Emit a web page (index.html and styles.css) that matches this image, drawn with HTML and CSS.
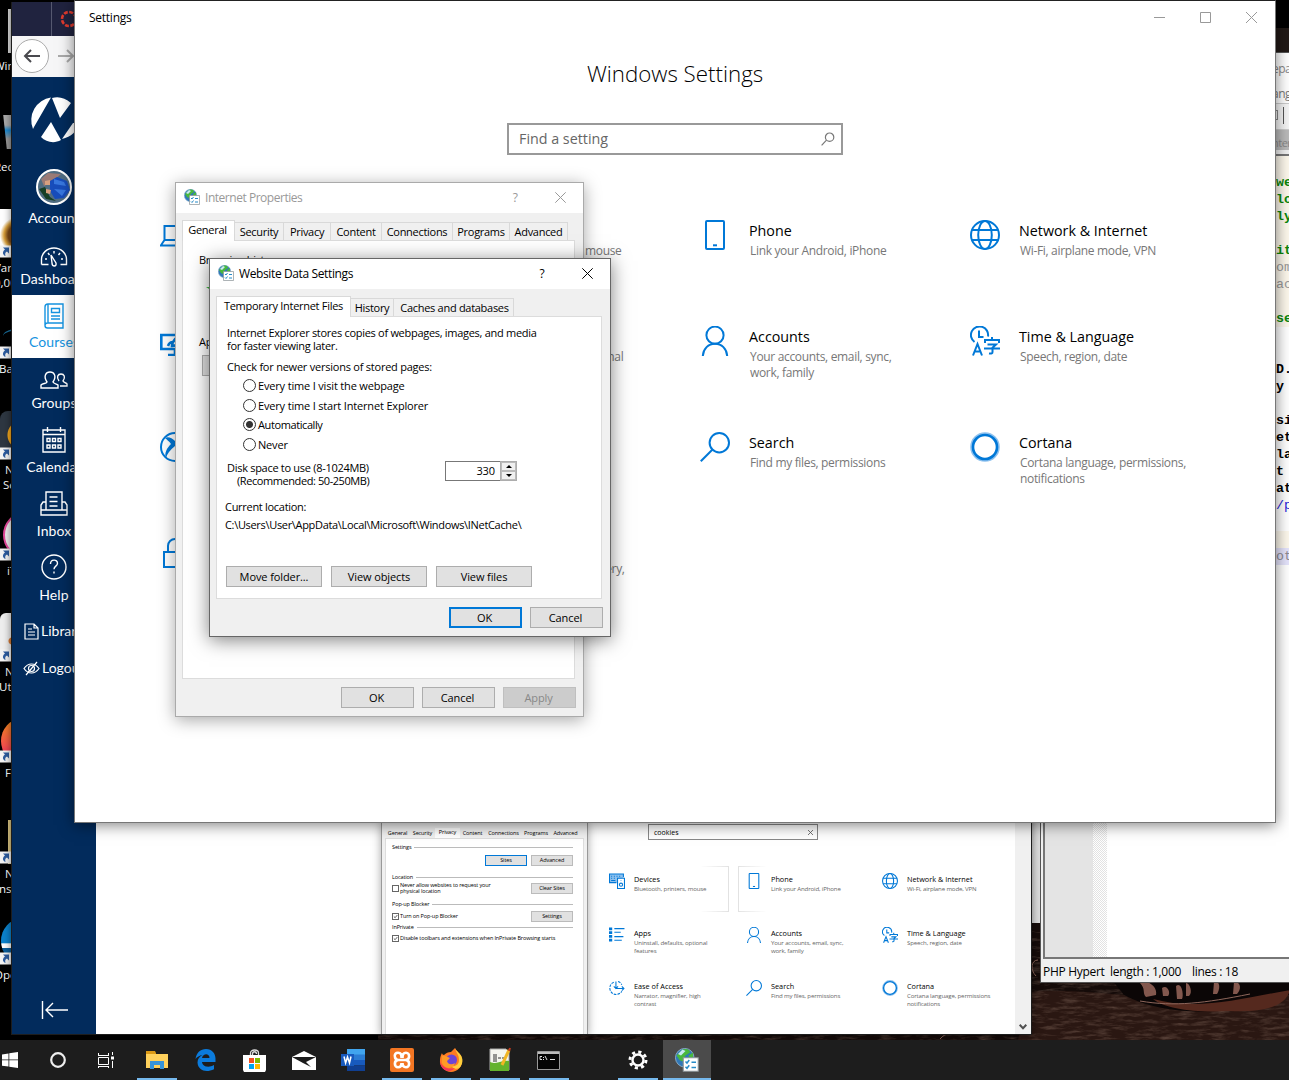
FILE: index.html
```html
<!DOCTYPE html>
<html lang="en">
<head>
<meta charset="utf-8">
<title>Settings</title>
<link rel="stylesheet" href="styles.css">
</head>
<body>
<svg class="defs" width="0" height="0">
  <symbol id="i-phone" viewBox="0 0 30 30"><rect x="6" y="1" width="18" height="28" rx="1"/><path d="M13 25.3h4"/></symbol>
  <symbol id="i-user" viewBox="0 0 30 30"><circle cx="15" cy="9.2" r="8.6"/><path d="M2.8 30c.5-7.300 5.500-12.200 12.200-12.200S26.700 22.700 27.200 30"/></symbol>
  <symbol id="i-search" viewBox="0 0 30 30"><circle cx="19.300" cy="10.700" r="9.700"/><path d="M12.500 17.500.8 29.200"/></symbol>
  <symbol id="i-globe" viewBox="0 0 30 30"><circle cx="15" cy="15" r="14"/><ellipse cx="15" cy="15" rx="6.800" ry="14"/><path d="M2 10h26M2 20h26"/></symbol>
  <symbol id="i-time" viewBox="0 0 30 30"><path d="M4.500 16A8.600 8.600 0 1 1 18 10.500M9 4.500V11h4.500M3 29.500 7.500 18l4.500 11.500M4.500 25.500h6M15 17v-3h14v3M22 11v3M17.500 18.500h8.500l-3.500 3.200V26c0 1.500-.8 1.800-3.500 1.500M14 22.500h16"/></symbol>
  <symbol id="i-cortana" viewBox="0 0 30 30"><circle cx="15" cy="15" r="13.600" stroke="#8ec1ee" stroke-width="2.400"/><circle cx="15" cy="15" r="12" stroke-width="2.600"/></symbol>
  <symbol id="i-laptop" viewBox="0 0 30 30"><path d="M4.500 6h22v14h-22zM4.500 20 .8 25.500h28.400L26.500 20"/></symbol>
  <symbol id="i-personal" viewBox="0 0 30 30"><path stroke-width="2.600" d="M22 9H1.300v14H29V12M8 29h14M15 23v6M12 20c0-5 3-9 14-14-3 8-7 14-14 14zM8 20c1-3 2-4 5-4"/></symbol>
  <symbol id="i-gaming" viewBox="0 0 30 30"><circle cx="15" cy="15" r="14"/><path fill="#0078d7" stroke="none" d="M5 6c3-2 7 0 10 3 3-3 7-5 10-3-4 1-6 3-8 6 5 5 7 9 7 14-2-6-5-10-9-12-5 4-8 8-9 12-2-5 1-10 5-14-2-3-4-4-6-6z"/></symbol>
  <symbol id="i-lock" viewBox="0 0 30 30"><path d="M4 14h22v15H4zM8 14V8a7 7 0 0 1 14 0v6"/></symbol>
  <symbol id="i-devices" viewBox="0 0 30 30"><path fill="#8ec1ee" d="M14 18H1V2h26v6"/><path d="M4 6h2m3 0h2m3 0h2m3 0h2M4 10h2m3 0h2M4 14h8"/><path fill="#fff" d="M16 10h13v19H16z"/><circle cx="22.500" cy="22" r="3"/><path d="M22 14h1"/></symbol>
  <symbol id="i-apps" viewBox="0 0 30 30"><path fill="#0078d7" stroke="none" d="M0 1h6v5H0zM0 8h6v5H0zM0 15h6v5H0zM0 22h6v5H0z"/><path d="M10 3h19M10 10h12M10 18h17M10 25h14"/></symbol>
  <symbol id="i-ease" viewBox="0 0 30 30"><path d="M13 3v13h15M24 12l4 4-4 4M9 12l4 4 4-4"/><path stroke-dasharray="5 2" d="M9 4a12 12 0 1 0 15 17M17 3a12 12 0 0 1 7 6"/></symbol>
  <symbol id="i-inet" viewBox="0 0 16 16"><circle cx="6.500" cy="6.500" r="6.200" fill="#3178b8" stroke="#8db2cf" stroke-width=".6"/><path fill="#49b83d" d="M5 1c3-1 5 0 5 2L7 5 5 9 3 8 1 5zM9 5l3-2v4l-2 2z"/><path fill="#c9e8f4" d="M2 4 5 1l2 1-3 3z"/><path fill="#fff" stroke="#8a9296" stroke-width=".7" d="M5.500 6.500h10v9h-10z"/><path fill="none" stroke="#278bc8" stroke-width="1" d="M7 9l1 1 1.500-2M7 12.500l1 1 1.500-2M11 9.500H14M11 13H14"/></symbol>
  <symbol id="i-arrow" viewBox="0 0 12 13"><path fill="#f4f4f4" d="M-3 .5h14v12H-3z"/><path fill="#2d5c9f" d="M3 2.500h6v6L7 6.600C5 7.500 5 9 5.500 11 2.500 10 2 6.500 5 4.500z"/></symbol>
</svg>

<div class="desktop">
  <div class="shortcuts">
    <div class="shortcut"><i class="art art-pc"></i><span>Win</span></div>
    <div class="shortcut"><i class="art art-bin"></i><span>Rec</span></div>
    <div class="shortcut"><i class="art art-war"></i><svg class="badge"><use href="#i-arrow"/></svg><span>Var<br>0,00</span></div>
    <div class="shortcut"><i class="art art-bat"></i><svg class="badge"><use href="#i-arrow"/></svg><span class="in0">Ba</span></div>
    <div class="shortcut"><i class="art art-nor"></i><svg class="badge"><use href="#i-arrow"/></svg><span class="in">N<br><b>Se</b></span></div>
    <div class="shortcut"><i class="art art-it"></i><svg class="badge"><use href="#i-arrow"/></svg><span class="in2">iT</span></div>
    <div class="shortcut"><i class="art art-util"></i><svg class="badge"><use href="#i-arrow"/></svg><span class="in">N<br><b class="far">Uti</b></span></div>
    <div class="shortcut"><i class="art art-fox"></i><svg class="badge"><use href="#i-arrow"/></svg><span class="in">F</span></div>
    <div class="shortcut"><i class="art art-ins"></i><svg class="badge"><use href="#i-arrow"/></svg><span class="in">N<br><b class="far">ns</b></span></div>
    <div class="shortcut"><i class="art art-open"></i><svg class="badge"><use href="#i-arrow"/></svg><span>Ope</span></div>
  </div>
  <svg class="wall" viewBox="0 0 911 160">
    <defs><filter id="grain" x="0" y="0" width="100%" height="100%"><feTurbulence type="fractalNoise" baseFrequency=".06 .3" numOctaves="4" seed="4"/><feColorMatrix values="0 0 0 0 .27  0 0 0 0 .17  0 0 0 0 .13  1 0 0 0 -.45"/></filter></defs>
    <path fill="#150b09" d="M0 0h911v160H0z"/>
    <path fill="#2a1712" d="M650 112c80-6 160 20 261 0v48H640z"/>
    <path filter="url(#grain)" d="M0 0h911v160H0z"/>
    <path fill="#0b0606" d="M730 95h181v20c-50 20-120 24-165 0z"/>
    <path fill="#55291e" d="M775 119c45 12 85 0 137-9-5 20-35 22-60 21-35 2-65-2-77-12z"/>
    <path fill="#83584e" d="M762 103c8-4 18 4 16 12l-10 2c-4-4 0-8-6-14zM784 108c6-4 9 6 6 8h-5zM798 106c6-5 8 10 6 13h-5zM808 103c4 0 7 10 3 13h-3zM836 102c7-2 6 8 3 12h-4zM856 102c8 0 7 8 3 12h-4z"/>
    <path fill="none" stroke="#8e665b" d="M660 80c-7 0-8 10-2 16M562 159c6-7 10-4 14-7M762 121c35 6 65 2 110-7"/>
  </svg>
  <div class="backwin"></div>

  <section class="npp">
    <div class="npp-title">epa</div>
    <div class="npp-menu">ang</div>
    <div class="npp-tools"><i></i><i></i></div>
    <div class="npp-tab">nter</div>
    <div class="npp-edit">
      <div class="npp-lines"></div><div class="npp-fold"></div>
      <div class="code">
        <p class="c g">we</p><p class="c g">lo</p><p class="c g">ly</p><p class="c"></p><p class="c g">it</p><p class="c s">om</p><p class="c s">ac</p><p class="c"></p><p class="c g">se</p><p></p><p></p><p>D.</p><p>y</p><p></p><p>si</p><p>et</p><p>la</p><p>t</p><p>at</p><p class="b">/p</p><p></p><p class="c"></p><p class="now">ot</p>
      </div>
    </div>
    <div class="npp-status"><span>PHP Hypert</span><span>length : 1,000</span><span>lines : 18</span></div>
  </section>

  <section class="browser">
    <div class="tabstrip"><i></i><svg width="18" height="18" viewBox="0 0 18 18"><circle cx="9" cy="9" r="7" fill="none" stroke="#e23b2e" stroke-width="2.600" stroke-dasharray="4 1.500"/></svg></div>
    <div class="toolbar">
      <span class="back"><svg width="18" height="16" viewBox="0 0 18 16"><path d="M17 8H2M8 2 2 8l6 6"/></svg></span>
      <svg class="fwd" width="18" height="16" viewBox="0 0 18 16"><path d="M1 8h15M10 2l6 6-6 6"/></svg>
    </div>
    <div class="viewport">
      <nav class="side">
        <svg class="logo" width="47" height="47" viewBox="0 0 47 47"><path fill="#fff" d="M1 33A23 23 0 0 1 19 1.500L2 31zM20 2c7-2 13 0 19 5L28 22zM9 41l10-15 10 18C22 48 14 46 9 41zM30 43l11-16h5c0 8-7 14-16 16z"/></svg>
        <div class="item acct"><svg class="avatar" width="36" height="36" viewBox="0 0 36 36"><circle cx="18" cy="18" r="17" fill="#506d82" stroke="#fff" stroke-width="2"/><path fill="#9b7b76" d="M5 10 12 4l13 1-9 8-8 4z"/><path fill="#173f25" d="M3 20l6-2 5 10 6 4-10-2z"/><path fill="#184dbb" d="M14 12l7-4 10 4 3 9-6 8-9 1-5-8z"/><path fill="#3877de" d="M18 10l10 3 2 4-12-2zM18 20l12 1-4 6z"/><path fill="#d7a07f" d="M9 12l5-1v5H9zM10 20l5 1-1 4-4-1z"/></svg><span>Account</span></div>
        <div class="item dash"><svg width="28" height="20" viewBox="0 0 28 20"><path d="M1.500 17.500v-5a12.500 11.500 0 0 1 25 0v5h-6M1.500 17.500h7M5 12h2M21 12h2M8 6l1.500 2M14 4v2.500M20 6l-1.500 2"/><path d="M11 8l5 8c1 4-4 4-4 0z"/></svg><span>Dashboard</span></div>
        <div class="item active"><svg width="22" height="26" viewBox="0 0 22 26"><path d="M5 1h15v19H4.500a2.500 2.500 0 0 0 0 5H20v-5M5 1a3 3 0 0 0-3 3v18M5 1v19M8.500 5.500h8v4h-8zM8 13h9M8 16h9"/></svg><span>Courses</span></div>
        <div class="item grp"><svg width="28" height="18" viewBox="0 0 28 18"><path d="M7 11C3 5 6 1 10 1s7 4 3 10c1 2 4 2 5 3v3H1v-3c2-2 5-1 6-3zM19 10c-3-4-1-7 2-7s5 3 2 7c1 2 4 2 4 3v2h-7"/></svg><span>Groups</span></div>
        <div class="item cal"><svg width="24" height="27" viewBox="0 0 24 27"><path d="M1 4h22v22H1zM1 8.500h22M5.500 1v5M18.500 1v5M5 12.500h3v3H5zM10.500 12.500h3v3h-3zM16 12.500h3v3h-3zM5 19h3v3H5zM10.500 19h3v3h-3zM16 19h3v3h-3z"/></svg><span>Calendar</span></div>
        <div class="item inb"><svg width="28" height="25" viewBox="0 0 28 25"><path d="M6 19V1h16v18M6 11H3l-2 3v10h26V14l-2-3h-3M1 19h26M9.500 6h8M9.500 10.500h8M9.500 15h8"/></svg><span>Inbox</span></div>
        <div class="item hlp"><svg width="26" height="26" viewBox="0 0 26 26"><circle cx="13" cy="13" r="12"/><path d="M9.500 10c0-5 7-5 7-.8 0 3-3.500 2.800-3.500 6M13 17.500v2"/></svg><span>Help</span></div>
        <div class="row lib"><svg width="15" height="17" viewBox="0 0 15 17"><path d="M1 1h9l4 4v11H1zM10 1v4h4M4 6h4M4 9h7M4 12h7"/></svg><span>Library</span></div>
        <div class="row"><svg width="17" height="15" viewBox="0 0 17 15"><path d="M1 7.500c4-6 11-6 15 0-4 6-11 6-15 0zM14 1 3 14"/><circle cx="8.500" cy="7.500" r="3"/></svg><span>Logout</span></div>
        <svg class="collapse" width="27" height="18" viewBox="0 0 27 18"><path d="M1.500 0v18M27 9H5M12 2 5 9l7 7"/></svg>
      </nav>
      <main class="page">
        <div class="shot-dialog">
          <div class="mini-tabs"><span>General</span><span>Security</span><span class="on">Privacy</span><span>Content</span><span>Connections</span><span>Programs</span><span>Advanced</span></div>
          <div class="mini-panel">
            <h6>Settings</h6>
            <div class="mini-row r1"><b class="btn hot">Sites</b><b class="btn">Advanced</b></div>
            <h6>Location</h6>
            <div class="mini-row r2"><i class="cb"></i><span>Never allow websites to request your<br>physical location</span><b class="btn">Clear Sites</b></div>
            <h6>Pop-up Blocker</h6>
            <div class="mini-row r3"><svg class="cb" viewBox="0 0 7 7"><path d="M1.200 3.500 3 5.200 6 1.500"/></svg><span>Turn on Pop-up Blocker</span><b class="btn">Settings</b></div>
            <h6>InPrivate</h6>
            <div class="mini-row r4"><svg class="cb" viewBox="0 0 7 7"><path d="M1.200 3.500 3 5.200 6 1.500"/></svg><span>Disable toolbars and extensions when InPrivate Browsing starts</span></div>
          </div>
        </div>
        <div class="shot-settings">
          <div class="mini-search"><span>cookies</span><svg width="5" height="5" viewBox="0 0 5 5"><path stroke="#555" stroke-width=".8" d="M0 0l5 5M5 0 0 5"/></svg></div>
          <div class="mini-grid">
            <div class="cat glow-r"><svg><use href="#i-devices"/></svg><div><h3>Devices</h3><p>Bluetooth, printers, mouse</p></div></div>
            <div class="cat glow-l"><svg><use href="#i-phone"/></svg><div><h3>Phone</h3><p>Link your Android, iPhone</p></div></div>
            <div class="cat"><svg><use href="#i-globe"/></svg><div><h3>Network &amp; Internet</h3><p>Wi-Fi, airplane mode, VPN</p></div></div>
            <div class="cat"><svg><use href="#i-apps"/></svg><div><h3>Apps</h3><p>Uninstall, defaults, optional<br>features</p></div></div>
            <div class="cat"><svg><use href="#i-user"/></svg><div><h3>Accounts</h3><p>Your accounts, email, sync,<br>work, family</p></div></div>
            <div class="cat"><svg><use href="#i-time"/></svg><div><h3>Time &amp; Language</h3><p>Speech, region, date</p></div></div>
            <div class="cat"><svg><use href="#i-ease"/></svg><div><h3>Ease of Access</h3><p>Narrator, magnifier, high<br>contrast</p></div></div>
            <div class="cat"><svg><use href="#i-search"/></svg><div><h3>Search</h3><p>Find my files, permissions</p></div></div>
            <div class="cat"><svg><use href="#i-cortana"/></svg><div><h3>Cortana</h3><p>Cortana language, permissions<br>notifications</p></div></div>
          </div>
        </div>
      </main>
      <div class="scroll"><svg width="8" height="6" viewBox="0 0 8 6"><path d="M.7.8 4 4.200 7.300.8" fill="none" stroke="#505050" stroke-width="2"/></svg></div>
    </div>
  </section>

  <section class="settings">
    <header><span>Settings</span>
      <svg width="11" height="11" viewBox="0 0 11 11"><path d="M0 5.500h11"/></svg>
      <svg width="11" height="11" viewBox="0 0 11 11"><path d="M.5.500h10v10H.5z"/></svg>
      <svg width="11" height="11" viewBox="0 0 11 11"><path d="M0 0l11 11M11 0 0 11"/></svg>
    </header>
    <h1>Windows Settings</h1>
    <div class="search"><span>Find a setting</span><svg width="14" height="14" viewBox="0 0 14 14"><circle cx="8.600" cy="5.200" r="4.200"/><path d="M5.500 8.200.6 13.300"/></svg></div>
    <div class="grid">
      <div class="cat"><svg><use href="#i-laptop"/></svg></div>
      <div class="cat"><svg></svg><div><h3>Devices</h3><p>Bluetooth, printers, mouse</p></div></div>
      <div class="cat"><svg><use href="#i-phone"/></svg><div><h3>Phone</h3><p>Link your Android, iPhone</p></div></div>
      <div class="cat"><svg><use href="#i-globe"/></svg><div><h3>Network &amp; Internet</h3><p>Wi-Fi, airplane mode, VPN</p></div></div>
      <div class="cat"><svg><use href="#i-personal"/></svg></div>
      <div class="cat"><svg></svg><div><h3>Apps</h3><p>Uninstall, defaults, optional</p></div></div>
      <div class="cat"><svg><use href="#i-user"/></svg><div><h3>Accounts</h3><p>Your accounts, email, sync,<br>work, family</p></div></div>
      <div class="cat"><svg><use href="#i-time"/></svg><div><h3>Time &amp; Language</h3><p>Speech, region, date</p></div></div>
      <div class="cat"><svg><use href="#i-gaming"/></svg></div>
      <div class="cat"></div>
      <div class="cat"><svg><use href="#i-search"/></svg><div><h3>Search</h3><p>Find my files, permissions</p></div></div>
      <div class="cat"><svg><use href="#i-cortana"/></svg><div><h3>Cortana</h3><p>Cortana language, permissions,<br>notifications</p></div></div>
      <div class="cat"><svg><use href="#i-lock"/></svg></div>
      <div class="cat"><svg></svg><div><h3>Update</h3><p>Windows Update, recovery,</p></div></div>
    </div>
  </section>

  <section class="dialog props">
    <header><svg class="app"><use href="#i-inet"/></svg><span>Internet Properties</span><b>?</b><svg class="x" viewBox="0 0 11 11"><path d="M.3.300l10.400 10.400M10.700.3.300 10.700"/></svg></header>
    <div class="tabs"><span class="on">General</span><span>Security</span><span>Privacy</span><span>Content</span><span>Connections</span><span>Programs</span><span>Advanced</span></div>
    <div class="panel"><p class="bh">Browsing history</p><i class="tick"></i><p class="ap">Ap</p><div class="btn"></div></div>
    <footer><div class="btn">OK</div><div class="btn">Cancel</div><div class="btn off">Apply</div></footer>
  </section>

  <section class="dialog wds">
    <header><svg class="app"><use href="#i-inet"/></svg><span>Website Data Settings</span><b>?</b><svg class="x" viewBox="0 0 11 11"><path d="M.3.300l10.400 10.400M10.700.3.300 10.700"/></svg></header>
    <div class="tabs"><span class="on">Temporary Internet Files</span><span>History</span><span>Caches and databases</span></div>
    <div class="panel">
      <p class="intro">Internet Explorer stores copies of webpages, images, and media<br>for faster viewing later.</p>
      <p class="check">Check for newer versions of stored pages:</p>
      <ul>
        <li><i></i>Every time I visit the webpage</li>
        <li><i></i>Every time I start Internet Explorer</li>
        <li class="auto"><i class="on"></i>Automatically</li>
        <li><i></i>Never</li>
      </ul>
      <div class="disk"><p>Disk space to use (8-1024MB)<br><span>(Recommended: 50-250MB)</span></p>
        <div class="spin"><span>330</span><div><i class="up"></i><i class="dn"></i></div></div></div>
      <p class="cur">Current location:</p>
      <p class="path">C:\Users\User\AppData\Local\Microsoft\Windows\INetCache\</p>
      <div class="acts"><div class="btn">Move folder...</div><div class="btn">View objects</div><div class="btn">View files</div></div>
    </div>
    <footer><div class="btn hot">OK</div><div class="btn">Cancel</div></footer>
  </section>

  <div class="taskbar">
    <div class="start"><svg width="16" height="16" viewBox="0 0 18 18"><path fill="#fff" d="M0 2.700 7.300 1.700v6.800H0zM8.200 1.500 18 0v8.500H8.200zM0 9.400h7.300v7L0 15.400zM8.200 9.400H18V18l-9.800-1.500z"/></svg></div>
    <div><svg width="18" height="18" viewBox="0 0 18 18"><circle cx="9" cy="9" r="6.800" fill="none" stroke="#eee" stroke-width="2.200"/></svg></div>
    <div><svg width="18" height="16" viewBox="0 0 18 16"><path fill="none" stroke="#fff" d="M1.500 4v-3M1 3.500h10M11.500 1v3M1.500 5.500h10v7h-10zM1.500 16v-2M1 14.500h10M11.500 16v-2M15.500 0v3M15.500 9v7"/><path fill="#fff" d="M14 4.500h3v3h-3z"/></svg></div>
    <i></i>
    <div class="run"><svg width="22" height="19" viewBox="0 0 22 19"><path fill="#dc9a16" d="M0 0h9l1 2v3H0z"/><path fill="#ffd15c" d="M0 3h22v14H0z"/><path fill="#3693d9" d="M4 10h14v8h-4v-4H8v4H4z"/></svg></div>
    <div><svg width="21" height="22" viewBox="0 0 21 22"><path fill="#0b7bdc" d="M.5 10C1.500 3.500 5.500 0 11 0c6 0 9.500 4.500 9.500 9.500V13H7c.5 5 7 6 12 3v4.200C11 24 3 21.500 2.500 13.500 2.500 10 4.500 7.500 7.500 6 4.500 6.500 2 8 .5 10zM7 9h7.500c0-5-6.500-5-7.500 0z"/></svg></div>
    <div><svg width="23" height="23" viewBox="0 0 23 23"><path fill="none" stroke="#ddd" stroke-width="1.300" d="M7.500 7V4c0-4 8-4 8 0v3M9.500 7V5c0-3 4-3 4 0"/><path fill="#fff" d="M0 6h23v15l-1 2H1l-1-2z"/><path fill="#f25022" d="M6 9h5v5H6z"/><path fill="#7fba00" d="M12 9h5v5h-5z"/><path fill="#00a4ef" d="M6 15h5v5H6z"/><path fill="#ffb900" d="M12 15h5v5h-5z"/></svg></div>
    <div><svg width="24" height="19" viewBox="0 0 24 19"><path fill="#fff" d="M0 6 12 0l12 6v13H0z"/><path fill="#1b1b1b" d="M0 6h24l-10 5 5 5-8-4z"/></svg></div>
    <div><svg width="24" height="22" viewBox="0 0 24 22"><path fill="#41a5ee" d="M6 0h18v6H6z"/><path fill="#2b7cd3" d="M6 5.500h18V11H6z"/><path fill="#185abd" d="M6 11h18v5.500H6z"/><path fill="#103f91" d="M6 16.500h18V22H6z"/><path fill="#185abd" d="M0 5h13v12H0z"/><path fill="none" stroke="#fff" stroke-width="1.500" d="M3 7.500 4.600 14 6.500 8l2 6L10 7.500"/></svg></div>
    <div class="run"><svg width="24" height="24" viewBox="0 0 24 24"><rect width="24" height="24" rx="2" fill="#f37623"/><path fill="none" stroke="#fff" stroke-width="2.600" d="M8.500 12h7M5 9.500C4 6 6 4.800 8 4.800c3 0 3.500 1.500 3.500 5.200M12.500 10c0-4 1-5.200 3.500-5.200 4 0 4.500 7-.5 7.200 5 .2 4.500 7.200.5 7.200-2.500 0-3.500-1.200-3.500-4.200M11.500 15c0 3-1 4.200-3.500 4.200-4 0-4.500-7 .5-7.200C6.500 12 5.500 11 5 9.500"/></svg></div>
    <div class="run"><svg width="24" height="24" viewBox="0 0 24 24"><path fill="#ff7a22" d="M3 5c0 1 1 2 2 2 2-2 4-3 7-3l4-4c1 3 6 5 7 11 1 8-5 13-11 13S0 18 1 12c0-3 1-5 2-7z"/><path fill="#ffcf3c" d="M16 0c1 5 4 6 4 12 0 5-4 7-8 6 8 8 13-3 11-8-1-5-6-6-7-10z"/><circle cx="12.500" cy="12" r="5.500" fill="#6e45d5"/><path fill="#ff9a27" d="M3 8c3-1 5 1 8 2l-3 3c1 4 5 4 8 2-2 7-11 6-13 0z"/><path fill="#f5355a" d="M1 13c2 6 7 9 15 7-5 5-14 4-15-7z"/></svg></div>
    <div class="run"><svg width="22" height="24" viewBox="0 0 22 24"><path fill="#f5f6ee" stroke="#aaa" d="M1 1h16l3 3v18H1z"/><path fill="#64b32d" d="M1 14c8 3 11-2 19-1v10H1z"/><path stroke="#333" fill="none" d="M5 6v8M7 6v8M9 10h3M13 10h2"/><path stroke="#f2b725" stroke-width="3" d="M20 2 13 17"/><path stroke="#c63b1e" stroke-width="2" d="m21 0-1 3"/></svg></div>
    <div class="run"><svg width="23" height="19" viewBox="0 0 23 19"><path fill="#050505" stroke="#999" d="M.5.500h22v18H.5z"/><path fill="#bbb" d="M1 1h21v2H1z"/><path stroke="#ddd" fill="none" d="M5 5.500H3v3h2M6.500 6v1M6.500 8v1M8 5l2 4M13 8.500h5"/></svg></div>
    <i></i>
    <div class="run"><svg width="20" height="20" viewBox="0 0 20 20"><circle cx="10" cy="10" r="5.500" fill="none" stroke="#fff" stroke-width="2.400"/><circle cx="10" cy="10" r="8" fill="none" stroke="#fff" stroke-width="3" stroke-dasharray="3.140 3.140"/></svg></div>
    <div class="run cur-app"><svg width="24" height="24"><use href="#i-inet"/></svg></div>
  </div>
</div>
</body>
</html>
```
FILE: styles.css
```css
* { box-sizing: border-box; }
body, h1, h3, h6, p, ul { margin: 0; padding: 0; }
h1, h3, h6 { font-weight: 400; }
li { list-style: none; }
body { width: 1289px; height: 1080px; overflow: hidden; background: #000; font-family: "Open Sans", "Noto Sans", sans-serif; white-space: nowrap; }
svg { display: block; flex: none; overflow: visible; fill: none; }
.defs { position: absolute; }
.desktop { position: relative; width: 1289px; height: 1080px; overflow: hidden; }
section, .shortcuts, .wall, .backwin, .taskbar { position: absolute; }

/* desktop */
.shortcuts { left: 0; top: 0; width: 12px; height: 1040px; overflow: hidden; }
.shortcut { position: relative; height: 101px; padding-top: 58px; color: #fff; font-size: 11.500px; line-height: 15px; }
.shortcut span { display: block; margin-left: -6px; }
.shortcut .in0 { margin-left: -1px; }
.shortcut .in { margin-left: 5px; }
.shortcut .in b { font-weight: 400; margin-left: -2px; }
.shortcut .in .far { margin-left: -6px; }
.shortcut .in2 { margin-left: 7px; }
.badge { position: absolute; left: 0; top: 43px; width: 12px; height: 13px; }
.art { position: absolute; left: 0; top: 9px; width: 40px; height: 44px; }
.art-pc { left: 8px; background: #ddd; }
.art-bin { left: 5px; top: 14px; height: 34px; background: linear-gradient(#aaa 30%, #1b8ad3 45%, #999 70%); transform: skewX(6deg); }
.art-war { top: 7px; background: radial-gradient(circle at 18px 26px, #7b4918 10px, #d8a03c 14px, #fff 18px); }
.art-bat { left: 3px; top: 25px; height: 16px; border-top: 2px solid #1a6f9d; border-radius: 50%; }
.art-nor { top: 7px; border-radius: 8px; background: radial-gradient(circle at 22px 24px, #f5a81c 14px, #2e3742 15px); }
.art-it { left: 3px; top: 8px; border-radius: 50%; background: #eee; border: 2px solid #e5489b; }
.art-util { border-radius: 6px; top: 7px; background: radial-gradient(circle at 12px 28px, #d87b36 3px, #eee 4px); }
.art-fox { left: 1px; top: 12px; border-radius: 50%; background: linear-gradient(#f28a1d, #f4524b 60%, #e21c6b); }
.art-ins { left: 8px; top: 12px; background: #ddc682; }
.art-open { left: 1px; top: 10px; border-radius: 50%; background: linear-gradient(#0c83cd 55%, #fff 56%, #fff 65%, #0a5d9a 66%); }
.wall { left: 378px; top: 880px; width: 911px; height: 160px; overflow: hidden; }
.backwin { left: 1030px; top: 54px; width: 11px; height: 869px; background: #dcdcdc; }

/* editor window */
.npp { left: 1040px; top: 52px; width: 320px; height: 931px; display: flex; flex-direction: column; background: #f0f0f0; border: 1px solid #555; box-shadow: 0 -24px 0 #211916; }
.npp-title, .npp-menu, .npp-tools, .npp-tab { flex: none; padding-left: 231px; font-size: 12px; letter-spacing: -.5px; color: #888; }
.npp-title { height: 30px; line-height: 32px; background: #fff; }
.npp-menu { height: 20px; line-height: 21px; background: #fff; color: #777; }
.npp-tools { height: 27px; border: 1px solid #ccc; background: #f5f5f5; padding-bottom: 3px; display: flex; align-items: center; gap: 5px; }
.npp-tools i { width: 5px; height: 10px; border: 1px solid #888; border-left: 0; }
.npp-tools i + i { width: 1px; height: 17px; border: 0; background: #555; }
.npp-tab { height: 20px; line-height: 25px; background: #bababa; font-size: 11px; }
.npp-edit { flex: 1; margin-top: 4px; display: flex; border: 2px solid #777; border-right: 0; margin-left: 2px; background: #fff; }
.npp-lines { width: 48px; background: #e4e4e4; }
.npp-fold { width: 14px; background: conic-gradient(#e2e2e2 25%, #fff 0 50%, #e2e2e2 0 75%, #fff 0) 0 0 / 2px 2px; }
.code { flex: 1; padding-top: 18px; background: linear-gradient(#fdf8ec 18px, transparent 0); }
.code p { height: 17px; padding-left: 169px; font: bold 13.300px/17px "Liberation Mono", monospace; color: #000; }
.code .c { background: #fdf8ec; }
.code .g { color: #0a860a; }
.code .s { color: #999; font-weight: 400; }
.code .b { color: #2222d8; font-weight: 400; }
.code .now { background: #e4e3fb; color: #8c8a94; font-weight: 400; }
.npp-status { flex: none; height: 23px; padding: 2px 0 0 2px; display: grid; grid-template-columns: 67px 82px 80px; font-size: 12px; line-height: 22px; letter-spacing: -.3px; }

/* browser window */
.browser { left: 11px; top: 2px; width: 1021px; height: 1033px; border: 1px solid #1d1d1d; border-top: 0; display: flex; flex-direction: column; background: #fff; box-shadow: 0 0 8px rgba(0,0,0,.5); }
.tabstrip { flex: none; height: 34px; background: #20233f; display: flex; align-items: center; }
.tabstrip i { width: 40px; height: 34px; border-right: 1px solid #55586f; margin-right: 8px; }
.toolbar { flex: none; height: 41px; background: #f6f6f7; display: flex; align-items: center; padding: 0 0 2px 3px; gap: 8px; }
.back { width: 34px; height: 34px; border: 1px solid #aaa; border-radius: 50%; background: #fff; display: grid; place-items: center; }
.toolbar svg { stroke: #4a4a4f; stroke-width: 2; }
.toolbar .fwd { stroke: #aaa; }
.viewport { flex: 1; min-height: 0; display: flex; }
.side { width: 84px; background: #022b5c; color: #fff; font: 14px/18px Lato, sans-serif; display: flex; flex-direction: column; align-items: center; padding-top: 19px; stroke: #fff; stroke-width: 1.400; }
.logo, .avatar { stroke: none; }
.logo { margin: 0 0 0 2px; }
.item { width: 84px; display: flex; flex-direction: column; align-items: center; }
.acct { margin-top: 26px; }
.item span { margin-top: 4px; stroke: none; letter-spacing: .1px; }
.dash { margin-top: 20px; }
.item.dash span { margin-top: 3px; }
.active { margin-top: 7px; height: 63px; padding-top: 8px; background: #fff; color: #1593e0; stroke: #1593e0; }
.grp { margin-top: 13px; }
.item.grp span { margin-top: 5px; }
.cal { margin-top: 14px; }
.item.cal span { margin-top: 5px; }
.inb { margin-top: 15px; }
.item.inb span { margin-top: 6px; }
.hlp { margin-top: 14px; }
.item.hlp span { margin-top: 6px; }
.row { width: 84px; padding-left: 11px; margin-top: 19px; display: flex; gap: 2px; align-items: center; stroke-width: 1.200; }
.lib { padding-left: 12px; margin-top: 18px; }
.collapse { margin-top: auto; margin-bottom: 15px; }
.page { flex: 1; min-width: 0; display: flex; align-items: flex-start; padding: 745px 0 0 285px; overflow: hidden; }
.scroll { width: 16px; background: #f0f0f0; display: flex; align-items: flex-end; justify-content: center; padding-bottom: 4px; }

/* picture inside the page */
.shot-dialog { flex: none; width: 207px; height: 214px; border: 1px solid #999; background: #f0f0f0; padding: 4px 3px 0; box-shadow: 0 0 9px rgba(0,0,0,.35); font-size: 5.500px; line-height: 7px; letter-spacing: -.12px; }
.mini-tabs { display: grid; grid-template-columns: 25px 25px 25px 25px 37px 28px 31px; height: 11px; text-align: center; padding-top: 3px; }
.mini-tabs .on { background: #fff; margin-top: -2px; height: 10px; line-height: 9px; }
.mini-panel { height: 199px; background: #fff; border: 1px solid #ddd; padding: 5px 10px 0 6px; }
.shot-dialog h6 { font-size: 5.500px; display: flex; align-items: center; gap: 3px; }
.shot-dialog h6::after { content: ""; flex: 1; height: 1px; background: #bbb; }
.mini-row { display: flex; align-items: center; gap: 1px; }
.r1 { justify-content: flex-end; gap: 4px; height: 22px; padding-bottom: 3px; margin-bottom: 1px; }
.r2 { height: 14px; margin: 0 0 6px; line-height: 6.500px; }
.r3 { height: 14px; margin: 1px 0 1px; }
.r4 { height: 14px; }
.mini-row .btn { width: 42px; height: 11px; border: 1px solid #bbb; background: #e1e1e1; font-weight: 400; display: grid; place-items: center; line-height: 1; padding: 1px 0 0; }
.mini-row span + .btn { margin-left: auto; }
.mini-row .hot { border-color: #0078d7; }
.cb { width: 7px; height: 7px; border: 1px solid #666; flex: none; stroke: #444; stroke-width: 1.200; }
.shot-settings { padding: 2px 0 0 21px; }
.mini-search { width: 170px; height: 16px; margin-left: 39px; border: 1px solid #888; display: flex; justify-content: space-between; align-items: center; padding: 0 4px 0 5px; font-size: 7px; }

/* settings window */
.settings { left: 74px; top: 0; width: 1202px; height: 823px; background: #fff; border: 1px solid #777; border-top-color: #222; box-shadow: 0 2px 14px rgba(0,0,0,.5); }
.settings header { height: 33px; display: flex; align-items: center; padding: 0 18px 0 14px; gap: 35px; font-size: 12px; letter-spacing: -.25px; stroke: #999; }
.settings header span { margin-right: auto; stroke: none; }
h1 { margin-top: 23px; text-align: center; font-size: 22.300px; font-weight: 300; line-height: 34px; }
.search { width: 336px; height: 32px; margin: 32px auto 0; border: 2px solid #999; display: flex; align-items: center; justify-content: space-between; padding: 0 6px 1px 10px; font-size: 14.300px; color: #666; stroke: #777; stroke-width: 1.200; }
.search span { stroke: none; }
.grid { display: grid; grid-template-columns: repeat(4, 270px); grid-auto-rows: 106px; margin: 65px 0 0 85px; }
.cat { display: flex; gap: 19px; stroke: #0078d7; stroke-width: 2; position: relative; }
.cat svg { width: 30px; height: 30px; }
.cat div { stroke: none; }
.cat h3 { font-size: 14.300px; line-height: 20px; color: #000; }
.cat p { font-size: 12px; line-height: 16px; color: #777; letter-spacing: -.33px; }
.grid h3 { margin-top: 1px; }
.grid p { margin: 2px 0 0 1px; }

/* reduced copy of the category grid */
.mini-grid { display: grid; grid-template-columns: 137px 136px 136px; grid-auto-rows: 53.500px; margin-top: 33px; }
.mini-grid .cat { gap: 9px; }
.mini-grid .cat svg { width: 16px; height: 16px; }
.mini-grid .cat h3 { font-size: 7.300px; line-height: 12px; }
.mini-grid .cat p { font-size: 6.100px; line-height: 8px; letter-spacing: -.15px; color: #666; }
.glow-l::before, .glow-r::before { content: ""; position: absolute; top: -7px; height: 44px; width: 28px; border: 1px solid #e2e2e2; }
.glow-l::before { left: -8px; border-right: 0; mask-image: linear-gradient(90deg, #000, transparent); }
.glow-r::before { left: 91px; border-left: 0; mask-image: linear-gradient(270deg, #000, transparent); }

/* dialogs */
.dialog { background: #f0f0f0; border: 1px solid #aaa; box-shadow: 0 3px 16px rgba(0,0,0,.35); font-size: 11px; line-height: 13px; letter-spacing: -.29px; color: #000; }
.dialog header { height: 30px; background: #fff; display: flex; align-items: center; padding: 0 0 2px 8px; font-size: 12px; letter-spacing: -.38px; }
.props header { letter-spacing: -.47px; }
.dialog header span { margin: 0 auto 0 5px; }
.dialog header b { font-weight: 400; width: 10px; text-align: center; margin-right: 35px; }
.app { width: 16px; height: 16px; }
.x { width: 11px; height: 11px; stroke: #000; margin-right: 17px; }
.props { left: 175px; top: 182px; width: 409px; height: 535px; }
.props header { color: #999; }
.props .x { stroke: #999; }
.wds { left: 209px; top: 258px; width: 402px; height: 379px; border-color: #666; box-shadow: 0 3px 18px rgba(0,0,0,.5); }
.tabs { display: grid; height: 20px; margin: 7px 6px 0; align-items: end; }
.props .tabs { grid-template-columns: 53px 49px 47px 51px 71px 57px 58px; }
.wds .tabs { grid-template-columns: 135px 43px 120px; }
.tabs span { height: 18px; border: 1px solid #d9d9d9; border-left: 0; border-bottom: 0; text-align: center; line-height: 18px; }
.wds .tabs span:last-child { padding-left: 2px; }
.tabs .on { height: 21px; margin-bottom: -1px; background: #fff; border-left: 1px solid #d9d9d9; line-height: 17px; position: relative; }
.props .tabs .on { padding-right: 2px; }
.panel { background: #fff; border: 1px solid #dcdcdc; margin: 0 8px 0 6px; }
.props .panel { height: 439px; padding: 12px 0 0 16px; }
.tick { display: block; width: 8px; height: 5px; margin: 21px 0 0 7px; background: #3cb93c; clip-path: polygon(0 0, 100% 0, 100% 100%); }
.ap { margin-top: 43px; }
.props .panel .btn { width: 80px; margin: 7px 0 0 3px; }
.btn { width: 73px; height: 21px; background: #e1e1e1; border: 1px solid #adadad; display: grid; place-items: center; padding-right: 2px; letter-spacing: -.1px; }
.acts .btn { padding-right: 0; }
.btn.off { background: #ccc; border-color: #bfbfbf; color: #888; }
.dialog .hot { border: 2px solid #0078d7; }
footer { display: flex; justify-content: flex-end; gap: 8px; padding: 8px 7px 0; }
.wds .panel { height: 283px; padding: 9px 0 0 8px; }
.intro { padding-left: 2px; }
.check { padding-left: 2px; margin-top: 8px; letter-spacing: -.23px; }
.wds ul { margin: 3px 0 0 18px; }
.wds li { height: 19.500px; display: flex; align-items: center; gap: 2px; letter-spacing: -.17px; }
.wds .auto { letter-spacing: -.4px; }
.wds li i { width: 13px; height: 13px; border: 1px solid #333; border-radius: 50%; }
.wds li .on { background: radial-gradient(circle, #333 3px, #fff 4px); }
.disk { display: flex; margin-top: 7px; padding-left: 2px; height: 27px; }
.disk p { width: 218px; }
.disk p span { margin-left: 10px; letter-spacing: -.42px; }
.spin { width: 72px; height: 20px; border: 1px solid #777; display: flex; justify-content: flex-end; align-items: center; }
.spin span { margin: -1px 5px 0 0; letter-spacing: -.1px; }
.spin div { width: 17px; height: 20px; border: 1px solid #adadad; background: #f0f0f0; display: flex; flex-direction: column; margin-right: -1px; }
.spin i { flex: 1; border: 1px solid #bbb; display: grid; place-items: center; }
.spin i::after { content: ""; border: 3px solid transparent; border-top: 0; border-bottom-color: #000; }
.spin .dn::after { transform: rotate(180deg); }
.cur { margin-top: 12px; }
.path { margin-top: 5px; letter-spacing: -.32px; }
.acts { display: flex; gap: 9px; margin: 35px 0 0 1px; }
.acts .btn { width: 96px; }

/* taskbar */
.taskbar { left: 0; top: 1040px; width: 1289px; height: 40px; background: #1d1d1d; display: grid; grid-template-columns: 34px 48px 48px 2px repeat(9, 49px) 40px 50px 48px; }
.taskbar div { display: grid; place-items: center; }
.taskbar .start { justify-content: start; padding-left: 2px; }
.taskbar .run { background: linear-gradient(#76b9ed, #76b9ed) 50% 100% / 40px 2px no-repeat; }
.taskbar .cur-app { background: linear-gradient(#76b9ed, #76b9ed) 50% 100% / 48px 2px no-repeat #4b4b4b; }
```
